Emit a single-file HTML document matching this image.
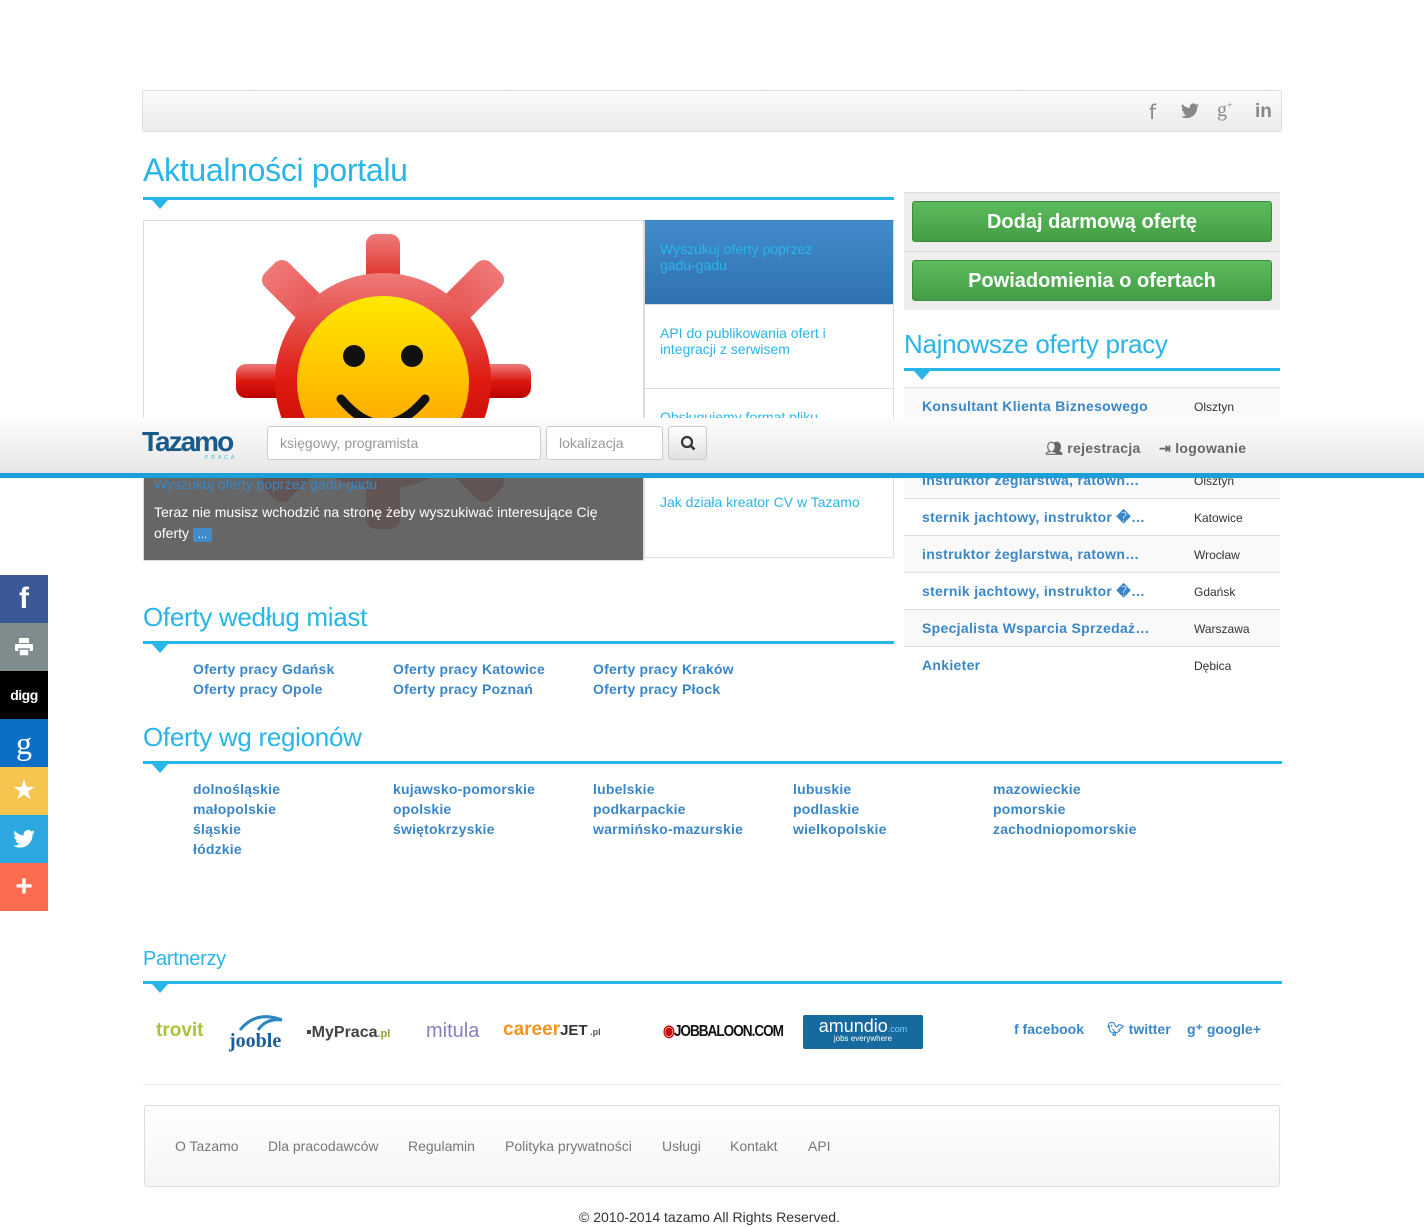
<!DOCTYPE html>
<html><head><meta charset="utf-8"><style>
*{margin:0;padding:0;box-sizing:border-box}
body{width:1424px;height:1227px;position:relative;background:#fff;font-family:"Liberation Sans",Arial,sans-serif;overflow:hidden}
.a{position:absolute}
h2{position:absolute;font-weight:normal;color:#29b5e8;letter-spacing:-.3px}
.uline{position:absolute;height:3px;background:#29b5e8}
.tri{position:absolute;width:0;height:0;border-left:8px solid transparent;border-right:8px solid transparent;border-top:9px solid #29b5e8}
.lk{position:absolute;color:#3a87c8;font-weight:bold;font-size:14px;letter-spacing:.2px}
.btn{position:absolute;left:912px;width:360px;height:41px;border-radius:3px;background:linear-gradient(#5dbb5d,#449d44);border:1px solid #3d8b3d;color:#fff;font-weight:bold;font-size:20px;text-align:center;line-height:41px}
.row{position:absolute;left:904px;width:376px;height:37px;border-top:1px solid #ddd}
.row b{position:absolute;left:18px;top:10px;color:#3a87c8;font-size:14px;letter-spacing:.3px}
.row span{position:absolute;left:290px;top:12px;font-size:12px;color:#333}
.soc{position:absolute;left:0;width:48px;height:48px;color:#fff;text-align:center;line-height:48px;font-weight:bold}
.news{position:absolute;left:644px;width:250px;height:84px;border:1px solid #ddd;border-top:none;color:#29b5e8;font-size:14px;padding:20px 15px;line-height:16px;background:#fff}
.ft{position:absolute;top:1138px;color:#777;font-size:14px}
</style></head><body>

<div class="a" style="left:142px;top:90px;width:1140px;height:42px;border:1px solid #ddd;border-radius:3px;background:linear-gradient(#fafafa,#ececec)"></div>
<div class="a" style="left:1149px;top:100px;color:#888;font-size:20px;font-family:'DejaVu Sans'">f</div>
<svg class="a" style="left:1181px;top:103px" width="18" height="16" viewBox="0 0 24 20"><path fill="#888" d="M24 2.4a10 10 0 0 1-2.8.8A5 5 0 0 0 23.3.4a10 10 0 0 1-3.1 1.2A4.9 4.9 0 0 0 11.8 6 14 14 0 0 1 1.7.9a4.9 4.9 0 0 0 1.5 6.6A4.9 4.9 0 0 1 1 6.9a4.9 4.9 0 0 0 3.9 4.8 5 5 0 0 1-2.2.1 4.9 4.9 0 0 0 4.6 3.4A9.9 9.9 0 0 1 0 17.3 14 14 0 0 0 7.5 19.5c9 0 14-7.5 14-14v-.6A10 10 0 0 0 24 2.4z"/></svg>
<div class="a" style="left:1217px;top:99px;color:#888;font-size:20px;font-family:'Liberation Serif'">g<sup style="font-size:10px">+</sup></div>
<div class="a" style="left:1255px;top:101px;color:#888;font-size:19px;font-weight:bold">in</div>

<h2 style="left:143px;top:152px;font-size:32px">Aktualności portalu</h2>
<div class="uline" style="left:143px;top:197px;width:751px"></div><div class="tri" style="left:152px;top:200px"></div>

<div class="a" style="left:143px;top:220px;width:501px;height:341px;border:1px solid #ddd;background:#fff;overflow:hidden">
<svg width="501" height="341" viewBox="144 221 501 341" style="position:absolute;left:-1px;top:-1px">
<defs><linearGradient id="fc" x1="0" y1="0" x2="0" y2="1"><stop offset="0" stop-color="#ffe800"/><stop offset="1" stop-color="#ff9800"/></linearGradient>
<linearGradient id="rc" x1="0" y1="0" x2="0" y2="1"><stop offset="0" stop-color="#ee7a7a"/><stop offset=".5" stop-color="#dd1a10"/><stop offset="1" stop-color="#b00"/></linearGradient></defs>
<g fill="url(#rc)">
<rect x="367" y="235" width="34" height="120" rx="10"/>
<rect x="237" y="365" width="295" height="34" rx="10"/>
<rect x="367" y="400" width="34" height="130" rx="10"/>
<rect x="367" y="222" width="34" height="320" rx="10" transform="rotate(45 384 382)"/>
<rect x="367" y="222" width="34" height="320" rx="10" transform="rotate(-45 384 382)"/>
<circle cx="384" cy="382" r="108"/></g>
<circle cx="384" cy="383" r="86" fill="url(#fc)"/>
<circle cx="355" cy="357" r="11" fill="#111"/><circle cx="413" cy="357" r="11" fill="#111"/>
<path d="M342 400 Q384 450 426 400" stroke="#111" stroke-width="9" fill="none" stroke-linecap="round"/>
</svg>
<div class="a" style="left:0;top:240px;width:501px;height:101px;background:rgba(90,90,90,.93)"></div>
<div class="a" style="left:10px;top:255px;color:#3a87c8;font-size:14px">Wyszukuj oferty poprzez gadu-gadu</div>
<div class="a" style="left:10px;top:281px;width:470px;color:#fff;font-size:14px;line-height:21px">Teraz nie musisz wchodzić na stronę żeby wyszukiwać interesujące Cię oferty <span style="background:#428bca;font-size:11px;padding:1px 5px;border-radius:2px">...</span></div>
</div>
<div class="news" style="top:220px;border-top:1px solid #3580c3;background:linear-gradient(#428bca,#2f72b0);height:85px">Wyszukuj oferty poprzez<br>gadu-gadu</div>
<div class="news" style="top:305px">API do publikowania ofert i integracji z serwisem</div>
<div class="news" style="top:389px">Obsługujemy format pliku</div>
<div class="news" style="top:473px;height:85px;padding-top:21px">Jak działa kreator CV w Tazamo</div>

<div class="a" style="left:904px;top:192px;width:376px;height:118px;background:#eee;border-top:1px solid #ddd"></div>
<div class="btn" style="top:201px">Dodaj darmową ofertę</div>
<div class="a" style="left:904px;top:251px;width:376px;height:1px;background:#ddd"></div>
<div class="btn" style="top:260px">Powiadomienia o ofertach</div>
<h2 style="left:904px;top:329px;font-size:26px">Najnowsze oferty pracy</h2>
<div class="uline" style="left:904px;top:368px;width:376px"></div><div class="tri" style="left:914px;top:371px"></div>
<div class="row" style="top:387px;background:#f9f9f9"><b>Konsultant Klienta Biznesowego</b><span>Olsztyn</span></div>
<div class="row" style="top:424px"><b>x</b></div>
<div class="row" style="top:461px;background:#f9f9f9"><b>instruktor żeglarstwa, ratown…</b><span>Olsztyn</span></div>
<div class="row" style="top:498px"><b>sternik jachtowy, instruktor �…</b><span>Katowice</span></div>
<div class="row" style="top:535px;background:#f9f9f9"><b>instruktor żeglarstwa, ratown…</b><span>Wrocław</span></div>
<div class="row" style="top:572px"><b>sternik jachtowy, instruktor �…</b><span>Gdańsk</span></div>
<div class="row" style="top:609px;background:#f9f9f9"><b>Specjalista Wsparcia Sprzedaż…</b><span>Warszawa</span></div>
<div class="row" style="top:646px"><b>Ankieter</b><span>Dębica</span></div>

<h2 style="left:143px;top:602px;font-size:26px">Oferty według miast</h2>
<div class="uline" style="left:143px;top:641px;width:751px"></div><div class="tri" style="left:152px;top:644px"></div>
<div class="lk" style="left:193px;top:661px">Oferty pracy Gdańsk</div><div class="lk" style="left:393px;top:661px">Oferty pracy Katowice</div><div class="lk" style="left:593px;top:661px">Oferty pracy Kraków</div>
<div class="lk" style="left:193px;top:681px">Oferty pracy Opole</div><div class="lk" style="left:393px;top:681px">Oferty pracy Poznań</div><div class="lk" style="left:593px;top:681px">Oferty pracy Płock</div>

<h2 style="left:143px;top:722px;font-size:26px">Oferty wg regionów</h2>
<div class="uline" style="left:143px;top:761px;width:1139px"></div><div class="tri" style="left:152px;top:764px"></div>
<div class="lk" style="left:193px;top:779px;line-height:20px">dolnośląskie<br>małopolskie<br>śląskie<br>łódzkie</div>
<div class="lk" style="left:393px;top:779px;line-height:20px">kujawsko-pomorskie<br>opolskie<br>świętokrzyskie</div>
<div class="lk" style="left:593px;top:779px;line-height:20px">lubelskie<br>podkarpackie<br>warmińsko-mazurskie</div>
<div class="lk" style="left:793px;top:779px;line-height:20px">lubuskie<br>podlaskie<br>wielkopolskie</div>
<div class="lk" style="left:993px;top:779px;line-height:20px">mazowieckie<br>pomorskie<br>zachodniopomorskie</div>

<h2 style="left:143px;top:948px;font-size:20px">Partnerzy</h2>
<div class="uline" style="left:143px;top:981px;width:1139px"></div><div class="tri" style="left:152px;top:984px"></div>
<div class="a" style="left:156px;top:1020px;color:#a8c43a;font-weight:bold;font-size:19px">trovit</div>
<div class="a" style="left:229px;top:1030px;color:#1a5c9a;font-weight:bold;font-size:20px;font-family:'Liberation Serif'">jooble</div>
<svg class="a" style="left:236px;top:1010px" width="50" height="22"><path d="M4 20 Q20 0 46 10 Q30 8 22 20" fill="none" stroke="#2e86c1" stroke-width="3"/></svg>
<div class="a" style="left:306px;top:1024px;color:#444;font-weight:bold;font-size:16px">▪MyPraca<span style="font-size:11px;color:#8a3">.pl</span></div>
<div class="a" style="left:426px;top:1020px;color:#8a7ec0;font-size:20px">mitula</div>
<div class="a" style="left:503px;top:1019px;color:#f7941d;font-weight:bold;font-size:19px">career<span style="color:#333;font-size:15px">JET</span><span style="font-size:9px;color:#555"> .pl</span></div>
<div class="a" style="left:663px;top:1021px;color:#111;font-weight:bold;font-size:16px;letter-spacing:-1.2px;transform:scaleX(.85);transform-origin:left"><span style="color:#c00">◉</span>JOBBALOON.COM</div>
<div class="a" style="left:803px;top:1015px;width:120px;height:34px;background:#166a9e;border-radius:2px;color:#fff;text-align:center"><div style="font-size:18px;margin-top:1px">amundio<span style="font-size:9px;color:#7cf">.com</span></div><div style="font-size:8px;margin-top:-3px">jobs everywhere</div></div>
<div class="a" style="left:1014px;top:1021px;color:#3a87c8;font-weight:bold;font-size:14px">f facebook</div>
<div class="a" style="left:1107px;top:1021px;color:#3a87c8;font-weight:bold;font-size:14px">🐦︎ twitter</div>
<div class="a" style="left:1187px;top:1021px;color:#3a87c8;font-weight:bold;font-size:14px">g⁺ google+</div>

<div class="a" style="left:143px;top:1084px;width:1139px;height:1px;background:#eee"></div>
<div class="a" style="left:144px;top:1105px;width:1136px;height:82px;border:1px solid #ddd;border-radius:3px;background:linear-gradient(#fff,#f5f5f5)"></div>
<div class="ft" style="left:175px">O Tazamo</div><div class="ft" style="left:268px">Dla pracodawców</div><div class="ft" style="left:408px">Regulamin</div><div class="ft" style="left:505px">Polityka prywatności</div><div class="ft" style="left:662px">Usługi</div><div class="ft" style="left:730px">Kontakt</div><div class="ft" style="left:808px">API</div>
<div class="a" style="left:579px;top:1209px;color:#333;font-size:14px">© 2010-2014 tazamo All Rights Reserved.</div>

<div class="a" style="left:0;top:418px;width:1424px;height:55px;background:linear-gradient(#fdfdfd,#e6e6e6)"></div>
<div class="a" style="left:0;top:473px;width:1424px;height:5px;background:#1a9fd8"></div>
<div class="a" style="left:142px;top:426px;color:#1a5a8a;font-size:28px;font-weight:bold;letter-spacing:-2px">Tazamo</div>
<div class="a" style="left:205px;top:455px;color:#29b5e8;font-size:5px;letter-spacing:3px">PRACA</div>
<div class="a" style="left:267px;top:426px;width:274px;height:34px;border:1px solid #ccc;border-radius:3px;background:#fff;color:#999;font-size:14px;padding:8px 12px">księgowy, programista</div>
<div class="a" style="left:546px;top:426px;width:117px;height:34px;border:1px solid #ccc;border-radius:3px;background:#fff;color:#999;font-size:14px;padding:8px 12px">lokalizacja</div>
<div class="a" style="left:668px;top:426px;width:39px;height:34px;border:1px solid #ccc;border-radius:3px;background:linear-gradient(#fff,#e0e0e0)"><svg width="39" height="34"><circle cx="18" cy="15" r="5" stroke="#333" stroke-width="2.2" fill="none"/><path d="M21.5 18.5l4 4" stroke="#333" stroke-width="2.5"/></svg></div>
<div class="a" style="left:1045px;top:440px;color:#666;font-weight:bold;font-size:14px;letter-spacing:.3px">👥︎ rejestracja</div>
<div class="a" style="left:1159px;top:440px;color:#666;font-weight:bold;font-size:14px;letter-spacing:.3px">⇥ logowanie</div>

<div class="soc" style="top:575px;background:#3b5998;font-size:30px">f</div>
<div class="soc" style="top:623px;background:#7f8c8d"><svg width="20" height="18" viewBox="0 0 20 18" style="margin-top:15px"><rect x="5" y="0" width="10" height="5" fill="#fff"/><rect x="1" y="6" width="18" height="7" rx="1" fill="#fff"/><rect x="5" y="11" width="10" height="7" fill="#fff" stroke="#7f8c8d" stroke-width="1.5"/></svg></div>
<div class="soc" style="top:671px;background:#000;font-size:14px;letter-spacing:-.5px">digg</div>
<div class="soc" style="top:719px;background:#0b6fc6;font-size:32px;font-family:'Liberation Serif';font-weight:normal">g</div>
<div class="soc" style="top:767px;background:#f5c54f;font-size:24px">★</div>
<div class="soc" style="top:815px;background:#2ca7e0"><svg width="22" height="18" viewBox="0 0 24 20" style="margin-top:15px"><path fill="#fff" d="M24 2.4a10 10 0 0 1-2.8.8A5 5 0 0 0 23.3.4a10 10 0 0 1-3.1 1.2A4.9 4.9 0 0 0 11.8 6 14 14 0 0 1 1.7.9a4.9 4.9 0 0 0 1.5 6.6A4.9 4.9 0 0 1 1 6.9a4.9 4.9 0 0 0 3.9 4.8 5 5 0 0 1-2.2.1 4.9 4.9 0 0 0 4.6 3.4A9.9 9.9 0 0 1 0 17.3 14 14 0 0 0 7.5 19.5c9 0 14-7.5 14-14v-.6A10 10 0 0 0 24 2.4z"/></svg></div>
<div class="soc" style="top:863px;background:#fb6b4d;font-size:30px">+</div>
</body></html>
